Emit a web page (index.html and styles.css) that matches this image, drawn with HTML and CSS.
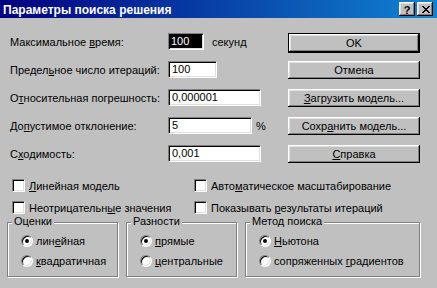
FILE: index.html
```html
<!DOCTYPE html>
<html lang="ru">
<head>
<meta charset="utf-8">
<title>Параметры поиска решения</title>
<link rel="stylesheet" href="styles.css">
</head>
<body>
<div class="dlg">
  <div class="title">
    <span class="title-text">Параметры поиска решения</span>
    <div class="tbtns">
      <span class="tb tb-help">?</span>
      <span class="tb tb-close"><svg width="8" height="7" viewBox="0 0 8 7"><path d="M0 0h2v1h1v1h2V1h1V0h2v1H7v1H6v1H5v1h1v1h1v1h1v1H6V6H5V5H3v1H2v1H0V6h1V5h1V4h1V3H2V2H1V1H0z" fill="#000"/></svg></span>
    </div>
  </div>

  <div class="top">
    <div class="fields">
      <div class="row"><span class="lbl">Максимальное <u>в</u>ремя:</span><span class="edit edit-time sel"><span class="seltext">100</span></span><span class="unit">секунд</span></div>
      <div class="row"><span class="lbl">Предел<u>ь</u>ное число итераций:</span><span class="edit edit-iter">100</span></div>
      <div class="row"><span class="lbl">О<u>т</u>носительная погрешность:</span><span class="edit edit-wide">0,000001</span></div>
      <div class="row"><span class="lbl">До<u>п</u>устимое отклонение:</span><span class="edit edit-tol">5</span><span class="pct">%</span></div>
      <div class="row"><span class="lbl">С<u>х</u>одимость:</span><span class="edit edit-wide">0,001</span></div>
    </div>
    <div class="buttons">
      <div class="btn btn-default"><span class="btn-in">OK</span></div>
      <div class="btn">Отмена</div>
      <div class="btn"><u>З</u>агрузить модель...</div>
      <div class="btn">Сохр<u>а</u>нить модель...</div>
      <div class="btn"><u>С</u>правка</div>
    </div>
  </div>

  <div class="checks">
    <label class="chk"><span class="cbox"></span><span><u>Л</u>инейная модель</span></label>
    <label class="chk"><span class="cbox"></span><span>Авто<u>м</u>атическое масштабирование</span></label>
    <label class="chk"><span class="cbox"></span><span>Неотрицательн<u>ы</u>е значения</span></label>
    <label class="chk"><span class="cbox"></span><span>Показывать <u>р</u>езультаты итераций</span></label>
  </div>

  <div class="groups">
    <div class="group g-small">
      <span class="legend">Оценки</span>
      <div class="radio"><span class="rb on"></span><span>лин<u>е</u>йная</span></div>
      <div class="radio"><span class="rb"></span><span><u>к</u>вадратичная</span></div>
    </div>
    <div class="group g-small">
      <span class="legend">Разности</span>
      <div class="radio"><span class="rb on"></span><span><u>п</u>рямые</span></div>
      <div class="radio"><span class="rb"></span><span><u>ц</u>ентральные</span></div>
    </div>
    <div class="group g-wide">
      <span class="legend">Метод поиска</span>
      <div class="radio"><span class="rb on"></span><span><u>Н</u>ьютона</span></div>
      <div class="radio"><span class="rb"></span><span>сопряженных <u>г</u>радиентов</span></div>
    </div>
  </div>
</div>
</body>
</html>
```

FILE: styles.css
```css
* { box-sizing: border-box; }
html, body { margin: 0; padding: 0; }
body {
  width: 437px;
  height: 288px;
  overflow: hidden;
  background: #c0c0c0;
  font-family: "Liberation Sans", Arial, sans-serif;
  font-size: 11px;
  color: #000;
}
u { text-decoration: underline; text-underline-offset: 1px; }

.dlg { width: 437px; height: 288px; background: #c0c0c0; }

.title {
  height: 18px;
  display: flex;
  align-items: center;
  justify-content: space-between;
  padding: 0 4px 0 3px;
  background: linear-gradient(90deg, #000080 0%, #1084d0 100%);
}
.title-text {
  color: #fff;
  font-weight: bold;
  font-size: 12px;
  line-height: 18px;
  padding-top: 1px;
}
.tbtns { display: flex; gap: 2px; }
.tb {
  width: 16px;
  height: 14px;
  background: #c0c0c0;
  box-shadow: inset -1px -1px #000, inset 1px 1px #fff, inset -2px -2px #808080, inset 2px 2px #dfdfdf;
  display: flex;
  align-items: center;
  justify-content: center;
}
.tb-help { font-weight: bold; font-size: 11px; line-height: 14px; padding-top: 1px; }
.tb-close svg { display: block; margin-left: 1px; }

.top { display: flex; margin-top: 15px; }
.fields {
  width: 288px;
  padding-left: 10px;
  display: flex;
  flex-direction: column;
  gap: 11px;
}
.row { display: flex; align-items: center; height: 17px; }
.lbl { width: 158px; white-space: nowrap; }
.edit {
  height: 17px;
  background: #fff;
  border: 1px solid;
  border-color: #808080 #fff #fff #808080;
  box-shadow: inset 1px 1px #000, inset -1px -1px #dfdfdf;
  padding: 1px 0 0 3px;
  line-height: 13px;
  white-space: nowrap;
}
.edit-time { width: 36px; }
.edit-iter { width: 49px; }
.edit-wide { width: 93px; }
.edit-tol { width: 84px; }
.sel { background: #000; color: #fff; padding-left: 2px; }
.unit { margin-left: 8px; }
.pct { margin-left: 4px; }

.buttons { width: 132px; display: flex; flex-direction: column; gap: 10px; }
.btn {
  height: 18px;
  background: #c0c0c0;
  box-shadow: inset -1px -1px #000, inset 1px 1px #fff, inset -2px -2px #808080, inset 2px 2px #dfdfdf;
  display: flex;
  align-items: center;
  justify-content: center;
  white-space: nowrap;
  line-height: 13px;
}
.btn-default {
  height: 20px;
  margin-bottom: -2px;
  border: 1px solid #000;
  box-shadow: none;
  padding: 0;
}
.btn-in {
  width: 100%;
  height: 100%;
  display: flex;
  align-items: center;
  justify-content: center;
  box-shadow: inset -1px -1px #000, inset 1px 1px #fff, inset -2px -2px #808080, inset 2px 2px #dfdfdf;
}

.checks {
  margin-top: 16px;
  padding-left: 12px;
  display: grid;
  grid-template-columns: 182px auto;
  row-gap: 9px;
}
.chk { display: flex; align-items: center; gap: 4px; height: 13px; white-space: nowrap; }
.cbox {
  width: 13px;
  height: 13px;
  flex: none;
  background: #fff;
  border: 1px solid;
  border-color: #808080 #fff #fff #808080;
  box-shadow: inset 1px 1px #000, inset -1px -1px #dfdfdf;
}

.groups { display: flex; gap: 8px; margin-top: 8px; padding-left: 7px; }
.group {
  position: relative;
  height: 55px;
  border: 1px solid #808080;
  box-shadow: inset 1px 1px #fff, 1px 1px #fff;
  padding: 12px 0 0 13px;
  display: flex;
  flex-direction: column;
  gap: 8px;
}
.g-small { width: 111px; }
.g-wide { width: 175px; }
.legend {
  position: absolute;
  left: 4px;
  top: -8px;
  background: #c0c0c0;
  padding: 0 2px;
  line-height: 13px;
}
.radio { display: flex; align-items: center; gap: 3px; height: 12px; white-space: nowrap; }
.rb {
  position: relative;
  width: 12px;
  height: 12px;
  flex: none;
  border-radius: 50%;
  background: #fff;
  border: 1px solid;
  border-color: #808080 #fff #fff #808080;
  box-shadow: inset 1px 1px #000, inset -1px -1px #dfdfdf;
}
.rb.on::after {
  content: "";
  position: absolute;
  left: 3px;
  top: 3px;
  width: 4px;
  height: 4px;
  border-radius: 50%;
  background: #000;
}
```
